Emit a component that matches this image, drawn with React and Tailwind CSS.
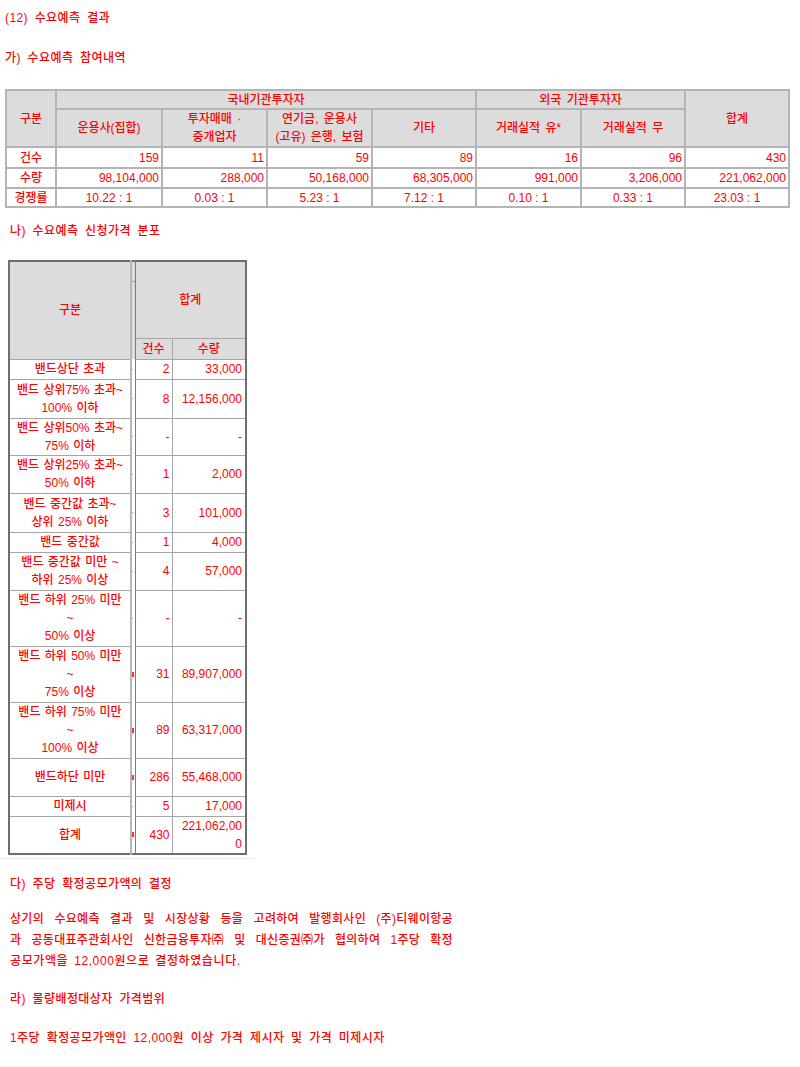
import React from "react";

const font = { fontFamily: '"Liberation Sans", "Noto Sans CJK KR", sans-serif' };

const demandRows = [
  { label: "건수", h: "h-[21px]", values: ["159", "11", "59", "89", "16", "96", "430"], center: false },
  { label: "수량", h: "h-[20px]", values: ["98,104,000", "288,000", "50,168,000", "68,305,000", "991,000", "3,206,000", "221,062,000"], center: false },
  { label: "경쟁률", h: "h-[19px]", values: ["10.22 : 1", "0.03 : 1", "5.23 : 1", "7.12 : 1", "0.10 : 1", "0.33 : 1", "23.03 : 1"], center: true },
];

const priceRows = [
  { label: ["밴드상단 초과"], n: "2", q: ["33,000"], h: "h-[20px]", mark: "dot" },
  { label: ["밴드 상위75% 초과~", "100% 이하"], n: "8", q: ["12,156,000"], h: "h-[39px]", mark: "dot" },
  { label: ["밴드 상위50% 초과~", "75% 이하"], n: "-", q: ["-"], h: "h-[37px]", mark: "dot" },
  { label: ["밴드 상위25% 초과~", "50% 이하"], n: "1", q: ["2,000"], h: "h-[38px]", mark: "dot" },
  { label: ["밴드 중간값 초과~", "상위 25% 이하"], n: "3", q: ["101,000"], h: "h-[39px]", mark: "dot" },
  { label: ["밴드 중간값"], n: "1", q: ["4,000"], h: "h-[20px]", mark: "dot" },
  { label: ["밴드 중간값 미만 ~", "하위 25% 이상"], n: "4", q: ["57,000"], h: "h-[38px]", mark: "dot" },
  { label: ["밴드 하위 25% 미만", "~", "50% 이상"], n: "-", q: ["-"], h: "h-[56px]", mark: "dot" },
  { label: ["밴드 하위 50% 미만", "~", "75% 이상"], n: "31", q: ["89,907,000"], h: "h-[56px]", mark: "bar" },
  { label: ["밴드 하위 75% 미만", "~", "100% 이상"], n: "89", q: ["63,317,000"], h: "h-[56px]", mark: "bar" },
  { label: ["밴드하단 미만"], n: "286", q: ["55,468,000"], h: "h-[38px]", mark: "bar" },
  { label: ["미제시"], n: "5", q: ["17,000"], h: "h-[20px]", mark: "dot" },
  { label: ["합계"], n: "430", q: ["221,062,00", "0"], h: "h-[36px]", mark: "bar" },
];

const paragraph = [
  "상기의 수요예측 결과 및 시장상황 등을 고려하여 발행회사인 (주)티웨이항공",
  "과 공동대표주관회사인 신한금융투자㈜ 및 대신증권㈜가 협의하여 1주당 확정",
];

function Title({ children, className = "" }) {
  return (
    <p className={`text-[12px] leading-[20px] tracking-[0.4px] whitespace-nowrap [word-spacing:3px] ${className}`}>
      {children}
    </p>
  );
}

function DemandTable() {
  const th = "border-2 border-[#b4b4b4] bg-[#dcdcdc] p-0 text-center align-middle font-medium [word-spacing:2px]";
  const td = "border-2 border-[#b4b4b4] bg-white p-0 align-middle";
  return (
    <table className="mt-[21px] w-[783px] table-fixed border-collapse border-2 border-[#8c8c8c] text-[12px] leading-[16px]">
      <colgroup>
        <col className="w-[50px]" />
        <col className="w-[106px]" />
        <col className="w-[105px]" />
        <col className="w-[105px]" />
        <col className="w-[104px]" />
        <col className="w-[105px]" />
        <col className="w-[104px]" />
        <col className="w-[104px]" />
      </colgroup>
      <thead>
        <tr className="h-[19px]">
          <th rowSpan={2} className={th}>구분</th>
          <th colSpan={4} className={th}>국내기관투자자</th>
          <th colSpan={2} className={th}>외국 기관투자자</th>
          <th rowSpan={2} className={th}>합계</th>
        </tr>
        <tr className="h-[36px]">
          <th className={th}>운용사(집합)</th>
          <th className={`${th} leading-[18px]`}>투자매매 ·<br />중개업자</th>
          <th className={`${th} leading-[18px]`}>연기금, 운용사<br />(고유) 은행, 보험</th>
          <th className={th}>기타</th>
          <th className={th}>거래실적 유*</th>
          <th className={th}>거래실적 무</th>
        </tr>
      </thead>
      <tbody>
        {demandRows.map((row) => (
          <tr key={row.label} className={row.h}>
            <td className={`${td} text-center`}>{row.label}</td>
            {row.values.map((v, i) => (
              <td key={i} className={`${td} ${row.center ? "text-center" : "pr-[2px] text-right"}`}>
                {v}
              </td>
            ))}
          </tr>
        ))}
      </tbody>
    </table>
  );
}

function PriceTable() {
  const th = "border border-[#a6a6a6] bg-[#dcdcdc] p-0 text-center align-middle font-medium";
  const td = "border border-[#a6a6a6] bg-white p-0 align-middle";
  const gap = "border-l-2 border-r border-l-[#b8b8b8] border-r-[#7a7a7a] p-0";
  return (
    <table className="mt-[19px] w-[237px] table-fixed border-collapse border-2 border-[#6e6e6e] text-[12px] leading-[18px]">
      <colgroup>
        <col className="w-[122px]" />
        <col className="w-[4px]" />
        <col className="w-[37px]" />
        <col className="w-[74px]" />
      </colgroup>
      <thead>
        <tr className="h-[76px]">
          <th rowSpan={2} className={th}>구분</th>
          <th className={`${gap} bg-[#dcdcdc]`}>
            <div className="flex h-[76px] flex-col">
              <div className="h-[20px] border-b border-[#9a9a9a]" />
            </div>
          </th>
          <th colSpan={2} className={th}>합계</th>
        </tr>
        <tr className="h-[21px]">
          <th className={`${gap} bg-[#dcdcdc]`} />
          <th className={th}>건수</th>
          <th className={th}>수량</th>
        </tr>
      </thead>
      <tbody>
        {priceRows.map((row, i) => (
          <tr key={i} className={row.h}>
            <td className={`${td} text-center whitespace-nowrap [word-spacing:1px]`}>
              {row.label.map((l, j) => (
                <div key={j}>{l}</div>
              ))}
            </td>
            <td className={`${gap} bg-white`}>
              <div className="flex justify-start">
                {row.mark === "bar" ? (
                  <span className="block h-[5px] w-[1.5px] bg-[#ff3030]" />
                ) : (
                  <span className="block h-[1px] w-[1px] bg-[#ff8080]" />
                )}
              </div>
            </td>
            <td className={`${td} pr-[2px] text-right`}>{row.n}</td>
            <td className={`${td} pr-[3px] text-right`}>
              {row.q.map((q, j) => (
                <div key={j}>{q}</div>
              ))}
            </td>
          </tr>
        ))}
      </tbody>
    </table>
  );
}

export default function App() {
  return (
    <div className="min-h-[1067px] w-[800px] bg-white font-medium text-[#ff0000]" style={font}>
      <section className="pl-[5px] pt-[8px]">
        <Title>(12) 수요예측 결과</Title>
        <Title className="mt-[20px]">가) 수요예측 참여내역</Title>
        <DemandTable />
      </section>

      <section className="pl-[8px]">
        <Title className="mt-[13px] pl-[2px]">나) 수요예측 신청가격 분포</Title>
        <PriceTable />
      </section>
      <div className="mt-[3px] h-px w-[255px] bg-[#e6edf6]" />

      <section className="pl-[10px]">
        <Title className="mt-[15px]">다) 주당 확정공모가액의 결정</Title>
        <div className="mt-[15px] w-[443px] text-[12px] leading-[21px] tracking-[0.3px]">
          {paragraph.map((line) => (
            <p key={line} className="flex justify-between whitespace-nowrap">
              {line.split(" ").map((w, i) => (
                <span key={i}>{w}</span>
              ))}
            </p>
          ))}
          <p className="whitespace-nowrap tracking-[0.6px] [word-spacing:2px]">공모가액을 12,000원으로 결정하였습니다.</p>
        </div>
        <Title className="mt-[17px]">라) 물량배정대상자 가격범위</Title>
        <Title className="mt-[19px]">1주당 확정공모가액인 12,000원 이상 가격 제시자 및 가격 미제시자</Title>
      </section>
    </div>
  );
}
